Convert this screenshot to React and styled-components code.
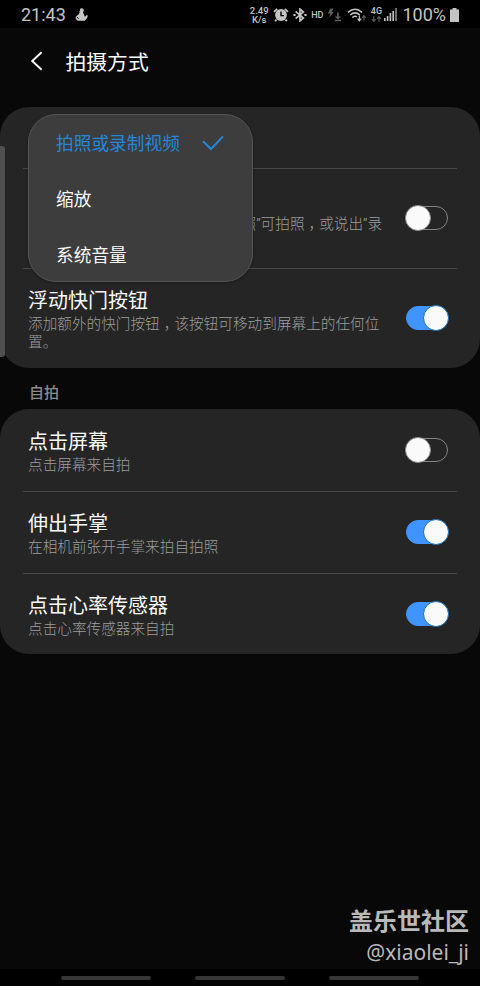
import React, { useState } from "react";
import styled, { createGlobalStyle } from "styled-components";

const volumeOptions = ["拍照或录制视频", "缩放", "系统音量"];

const Switch = ({ on, onClick }) => (
  <Track $on={on} role="switch" aria-checked={on} onClick={onClick}>
    <Thumb $on={on} />
  </Track>
);

// the full-width comma sits in the middle of its cell
const Description = ({ lines }) => (
  <Desc>
    {lines.map((line) => (
      <DescLine key={line}>
        {line.split("，").map((part, i) => (
          <React.Fragment key={part}>
            {i > 0 && <Comma>，</Comma>}
            {part}
          </React.Fragment>
        ))}
      </DescLine>
    ))}
  </Desc>
);

const SettingRow = ({ title, lines, height, defaultOn }) => {
  const [on, setOn] = useState(defaultOn);
  return (
    <Row $height={height}>
      <RowText>
        <RowTitle>{title}</RowTitle>
        <Description lines={lines} />
      </RowText>
      <Switch on={on} onClick={() => setOn(!on)} />
    </Row>
  );
};

const PersonIcon = () => (
  <svg width="14" height="14" viewBox="0 0 14 14" fill="#c4c4c4">
    <path d="M5 0.8 6.5 0.2 8.4 0.8 8.8 2.8 7.8 4.4 9 6.2 9.6 8.6 11.2 8 11.4 6.8 12.8 7.4 12.4 9.6 11 11.4 9.8 12.8H2.8L0.8 11 0.6 9.4 1.4 8 3.4 6.6 4.6 4.4 4.2 3.2 5.2 2.6Z" />
    <path d="M2.2 9.2 3.6 10.8" stroke="#000" strokeWidth="1" />
  </svg>
);

const AlarmIcon = () => (
  <svg width="16" height="14" viewBox="0 0 16 14">
    <path d="M1 3.8 4.2 0.8M15 3.8 11.8 0.8M3.5 11.5 2.2 13.3M12.5 11.5 13.8 13.3" stroke="#c4c4c4" strokeWidth="1.8" />
    <circle cx="8" cy="7" r="5.9" fill="#c4c4c4" />
    <path d="M8 3.6V7.6H11" fill="none" stroke="#000" strokeWidth="1.4" />
  </svg>
);

const BluetoothIcon = () => (
  <svg width="14" height="14" viewBox="0 0 14 14" fill="none" stroke="#c4c4c4" strokeWidth="1.7">
    <path d="M2.6 3.4 10.4 10 7 13V1L10.4 4 2.6 10.6" />
    <path d="M0.4 7H2.6M11.4 7H13.6" strokeWidth="1.8" />
  </svg>
);

const FlashDownloadIcon = () => (
  <svg width="15" height="14" viewBox="0 0 15 14" fill="#5c5c5c">
    <path d="M3.2 0.5H6.6L4.8 4H7L2 9.6 3.2 5.6H0.8Z" />
    <path d="M10 4.6H11.8V8.4H14.2L10.9 11.4 7.6 8.4H10ZM7.8 11.8H14V13.2H7.8Z" />
  </svg>
);

const WifiIcon = () => (
  <svg width="20" height="14" viewBox="0 0 20 14" fill="none">
    <path d="M1 4.4Q8 -2 15 4.4" stroke="#c4c4c4" strokeWidth="1.5" />
    <path d="M3.2 7Q8 2.8 12.8 7" stroke="#c4c4c4" strokeWidth="1.5" />
    <path d="M5.4 9.6Q8 7.4 10 9" stroke="#c4c4c4" strokeWidth="1.5" />
    <path d="M12.4 7.5V12.5M10.6 10.6 12.4 12.8 14.2 10.6" stroke="#c4c4c4" strokeWidth="1.2" />
    <path d="M17 12.8V8M15.2 9.8 17 7.6 18.8 9.8" stroke="#5c5c5c" strokeWidth="1.2" />
  </svg>
);

const DataArrowsIcon = () => (
  <svg width="11" height="6" viewBox="0 0 11 6" fill="none" stroke="#5c5c5c" strokeWidth="1.2">
    <path d="M2.8 0V5.2M0.8 3.2 2.8 5.4 4.8 3.2" />
    <path d="M8 6V0.8M6 2.8 8 0.6 10 2.8" />
  </svg>
);

const SignalIcon = () => (
  <svg width="13" height="13" viewBox="0 0 13 13" fill="#c4c4c4">
    <path d="M0 10H1.6V13H0ZM2.8 8H4.4V13H2.8ZM5.6 5H7.2V13H5.6ZM8.4 3H10V13H8.4Z" />
    <path d="M11.2 0H12.8V13H11.2Z" fill="#8a8a8a" />
  </svg>
);

const BatteryIcon = () => (
  <svg width="9" height="14" viewBox="0 0 9 14" fill="#c4c4c4">
    <path d="M2.5 0H6.5V1.5H9V14H0V1.5H2.5Z" />
  </svg>
);

export default function App() {
  const [selected, setSelected] = useState(volumeOptions[0]);

  return (
    <Screen>
      <GlobalStyle />
      <StatusBar>
        <Clock>21:43</Clock>
        <PersonIcon />
        <StatusIcons>
          <Speed>
            <span>2.49</span>
            <span>K/s</span>
          </Speed>
          <AlarmIcon />
          <BluetoothIcon />
          <Hd>HD</Hd>
          <FlashDownloadIcon />
          <WifiIcon />
          <Network>
            <span>4G</span>
            <DataArrowsIcon />
          </Network>
          <SignalIcon />
          <Percent>100%</Percent>
          <BatteryIcon />
        </StatusIcons>
      </StatusBar>

      <Header>
        <svg width="14" height="20" viewBox="0 0 14 20" fill="none" stroke="#fafafa" strokeWidth="1.9">
          <path d="M11.6 1.2 2.2 10 11.6 18.8" />
        </svg>
        <h1>拍摄方式</h1>
      </Header>

      <Card>
        <VolumeRow $height={61}>
          <RowText>
            <RowTitle>音量键</RowTitle>
            <Desc>{selected}</Desc>
          </RowText>
        </VolumeRow>
        <Divider />
        <SettingRow
          height={99}
          title="语音控制"
          lines={["说出 “微笑”、“茄子”、“拍摄” 或“拍照”可拍照，或说出“录", "制视频”可录制视频。"]}
          defaultOn={false}
        />
        <Divider />
        <SettingRow
          height={99}
          title="浮动快门按钮"
          lines={["添加额外的快门按钮，该按钮可移动到屏幕上的任何位", "置。"]}
          defaultOn
        />
        <ScrollThumb />
        <Menu>
          {volumeOptions.map((option) => (
            <MenuItem key={option} $active={option === selected} onClick={() => setSelected(option)}>
              {option}
              {option === selected && (
                <svg width="22" height="16" viewBox="0 0 22 16" fill="none" stroke="#2487d8" strokeWidth="2">
                  <path d="M1 6.2 9 14 21 1.4" />
                </svg>
              )}
            </MenuItem>
          ))}
        </Menu>
      </Card>

      <SectionTitle>自拍</SectionTitle>

      <Card>
        <SettingRow height={82} title="点击屏幕" lines={["点击屏幕来自拍"]} defaultOn={false} />
        <Divider />
        <SettingRow height={81} title="伸出手掌" lines={["在相机前张开手掌来拍自拍照"]} defaultOn />
        <Divider />
        <SettingRow height={80} title="点击心率传感器" lines={["点击心率传感器来自拍"]} defaultOn />
      </Card>

      <Watermark>
        <strong>盖乐世社区</strong>
        <span>@xiaolei_ji</span>
      </Watermark>

      <NavBar>
        <NavHint />
        <NavHint />
        <NavHint />
      </NavBar>
    </Screen>
  );
}

const GlobalStyle = createGlobalStyle`
  * {
    box-sizing: border-box;
  }
  body {
    margin: 0;
    background: #080808;
  }
`;

const Screen = styled.div`
  width: 480px;
  height: 986px;
  display: flex;
  flex-direction: column;
  overflow: hidden;
  background: #080808;
  color: #fafafa;
  font-family: Roboto, "Noto Sans CJK SC", sans-serif;
  svg {
    flex: none;
  }
`;

const StatusBar = styled.div`
  height: 28px;
  flex: none;
  display: flex;
  align-items: center;
  padding: 1px 21px 0 21px;
  background: #000;
  color: #c4c4c4;
`;

const Clock = styled.span`
  width: 54px;
  font-size: 18px;
  line-height: 20px;
`;

const StatusIcons = styled.div`
  margin-left: auto;
  display: flex;
  align-items: center;
`;

const Speed = styled.div`
  width: 20px;
  margin-right: 4px;
  display: flex;
  flex-direction: column;
  align-items: center;
  font-size: 9.5px;
  line-height: 9px;
  font-weight: 500;
  & + svg {
    margin-right: 4px;
  }
`;

const Hd = styled.span`
  margin: 0 4px 0 4px;
  font-size: 9px;
  font-weight: 500;
  & + svg {
    margin-right: 5px;
  }
`;

const Network = styled.div`
  width: 12px;
  margin: 0 2px 0 3px;
  display: flex;
  flex-direction: column;
  align-items: center;
  font-size: 9px;
  line-height: 9px;
  font-weight: 500;
`;

const Percent = styled.span`
  margin: 0 4px 0 5px;
  font-size: 18px;
  line-height: 20px;
`;

const Header = styled.header`
  height: 79px;
  flex: none;
  display: flex;
  align-items: flex-start;
  padding: 23px 0 0 30px;
  h1 {
    margin: -1px 0 0 21.5px;
    font-size: 20.8px;
    font-weight: 400;
    line-height: 26px;
  }
`;

const Card = styled.section`
  position: relative;
  flex: none;
  border-radius: 29px;
  background: #252525;
`;

const Row = styled.div`
  height: ${(props) => props.$height}px;
  display: flex;
  align-items: center;
  justify-content: space-between;
  padding: 0 31px 0 28px;
`;

const VolumeRow = styled(Row)`
  padding-top: 27px;
`;

const RowText = styled.div`
  display: flex;
  flex-direction: column;
  white-space: nowrap;
`;

const RowTitle = styled.div`
  padding-top: 2px;
  font-size: 20px;
  line-height: 27px;
`;

const Desc = styled.div`
  font-size: 14.65px;
  font-weight: 300;
  line-height: 18px;
  color: #9c9c9c;
`;

const DescLine = styled.div`
  height: 18px;
`;

const Comma = styled.span`
  padding-left: 4px;
  margin-right: -4px;
`;

const Divider = styled.div`
  height: 1px;
  margin: 0 23px;
  background: #484848;
`;

const Track = styled.button`
  width: 44px;
  height: 26px;
  flex: none;
  display: flex;
  align-items: center;
  justify-content: ${(props) => (props.$on ? "flex-end" : "flex-start")};
  margin-bottom: 1px;
  padding: 0;
  border: none;
  background: none;
  position: relative;
  &::before {
    content: "";
    position: absolute;
    inset: 1px;
    border-radius: 12px;
    background: ${(props) => (props.$on ? "#4094ff" : "transparent")};
    border: 1px solid ${(props) => (props.$on ? "#4094ff" : "#858585")};
  }
`;

const Thumb = styled.span`
  position: relative;
  width: 26px;
  height: 26px;
  border-radius: 50%;
  background: #fafafa;
  border: 1px solid ${(props) => (props.$on ? "#1672be" : "#8c8c8c")};
`;

const ScrollThumb = styled.div`
  position: absolute;
  left: 0;
  top: 39px;
  width: 5px;
  height: 211px;
  border-radius: 0 3px 3px 0;
  background: #505050;
`;

const Menu = styled.div`
  position: absolute;
  left: 28px;
  top: 7px;
  width: 225px;
  height: 168px;
  border: 1px solid #555;
  border-radius: 28px;
  background: #3d3d3d;
  box-shadow: 0 1px 3px rgba(0, 0, 0, 0.35);
`;

const MenuItem = styled.div`
  height: 56px;
  display: flex;
  align-items: center;
  justify-content: space-between;
  padding: 0 28px 2px 27px;
  font-size: 17.7px;
  color: ${(props) => (props.$active ? "#2487d8" : "#fafafa")};
  svg {
    margin-top: 2px;
  }
`;

const SectionTitle = styled.h2`
  height: 41px;
  flex: none;
  margin: 0;
  padding: 14px 29px 0;
  font-size: 15px;
  line-height: 22px;
  font-weight: 500;
  color: #8c8c8c;
`;

const Watermark = styled.div`
  margin-top: auto;
  padding: 0 11px 3px 0;
  display: flex;
  flex-direction: column;
  align-items: flex-end;
  color: #b9b9b9;
  strong {
    font-size: 24px;
    line-height: 31px;
    font-weight: 700;
  }
  span {
    font-family: "Noto Sans", sans-serif;
    font-size: 21px;
    line-height: 28px;
  }
`;

const NavBar = styled.nav`
  height: 17px;
  flex: none;
  display: flex;
  justify-content: center;
  gap: 44px;
  padding-top: 7px;
  background: #000;
`;

const NavHint = styled.span`
  width: 90px;
  height: 4px;
  border-radius: 2px;
  background: #363636;
`;
